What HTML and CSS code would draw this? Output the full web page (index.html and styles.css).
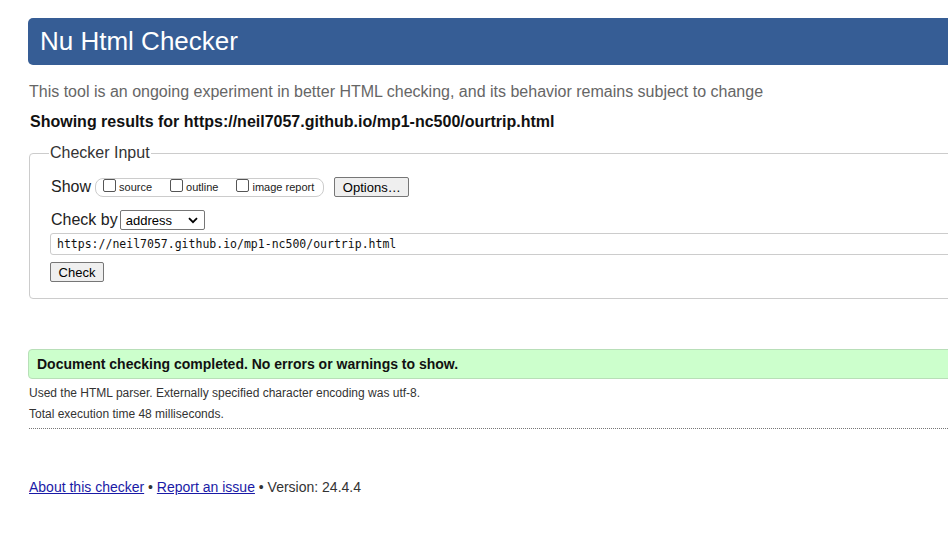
FILE: index.html
```html
<!DOCTYPE html>
<html>
<head>
<meta charset="utf-8">
<title>Nu Html Checker</title>
<link rel="stylesheet" href="styles.css">
</head>
<body>
<div class="page">
  <header class="banner"><h1 class="title">Nu Html Checker</h1></header>
  <p class="intro">This tool is an ongoing experiment in better HTML checking, and its behavior remains subject to change</p>
  <p class="showing">Showing results for https://neil7057.github.io/mp1-nc500/ourtrip.html</p>
  <fieldset class="checker">
    <legend class="legend">Checker Input</legend>
    <div class="row show-row">
      <span class="label">Show</span>
      <span class="opts">
        <label class="opt"><span class="box"></span>source</label>
        <label class="opt"><span class="box"></span>outline</label>
        <label class="opt"><span class="box"></span>image report</label>
      </span>
      <span class="btn options">Options…</span>
    </div>
    <div class="row by-row">
      <span class="label">Check by</span>
      <span class="select">address<svg class="chev" width="10" height="7" viewBox="0 0 10 7"><path d="M1 1.2 L5 5.2 L9 1.2" fill="none" stroke="#000" stroke-width="1.8"/></svg></span>
    </div>
    <div class="url">https://neil7057.github.io/mp1-nc500/ourtrip.html</div>
    <div class="row"><span class="btn check">Check</span></div>
  </fieldset>
  <div class="success">Document checking completed. No errors or warnings to show.</div>
  <p class="detail">Used the HTML parser. Externally specified character encoding was utf-8.</p>
  <p class="detail">Total execution time 48 milliseconds.</p>
  <hr class="dots">
  <p class="footer"><a href="#">About this checker</a> • <a href="#">Report an issue</a> • Version: 24.4.4</p>
</div>
</body>
</html>
```
FILE: styles.css
```css
html { overflow: hidden; background: #fff; }
body { margin: 0; font-family: "Liberation Sans", Arial, sans-serif; color: #222; }
.page { padding-left: 28px; width: 1000px; }
.banner { margin-top: 18px; height: 47px; background: #365d95; border-radius: 5px 0 0 5px; }
.title { margin: 0; padding-left: 12px; font-size: 26px; font-weight: normal; line-height: 47px; color: #fff; }
.intro { margin: 18px 0 0 1px; font-size: 16px; line-height: 18px; color: #666; }
.showing { margin: 12px 0 0 2px; font-size: 16px; line-height: 18px; font-weight: bold; color: #111; }
.checker { margin: 13px 0 0 1px; padding: 6px 20px 16px 21px; border: 1px solid #ccc; border-radius: 4px; }
.legend { padding: 0 1px; font-size: 16px; line-height: 18px; color: #333; margin-left: -2px; }
.row { display: flex; align-items: center; }
.label { font-size: 16px; color: #222; }
.show-row { height: 20px; margin-top: 9px; }
.opts { display: flex; align-items: center; margin-left: 4px; height: 17px; border: 1px solid #ccc; border-radius: 8px; padding: 0 9px 0 7px; }
.opt { display: flex; align-items: center; font-size: 11px; color: #222; margin-right: 18px; }
.opt:last-child { margin-right: 0; }
.box { display: inline-block; width: 11px; height: 11px; border: 1px solid #555; border-radius: 2px; margin-right: 3px; margin-top: -3px; }
.btn { display: inline-flex; align-items: center; justify-content: center; box-sizing: border-box; font-size: 13px; color: #000; background: #efefef; border: 1px solid #767676; border-radius: 2px; height: 20px; }
.options { margin-left: 10px; width: 75px; }
.by-row { margin-top: 13px; height: 20px; }
.select { display: inline-flex; align-items: center; justify-content: space-between; box-sizing: border-box; width: 85px; height: 20px; margin-left: 2px; padding: 0 6px 0 5px; border: 1px solid #767676; border-radius: 2px; font-size: 13px; color: #000; }
.url { margin: 3px -50px 0 -1px; height: 20px; line-height: 20px; border: 1px solid #ccc; border-radius: 3px; padding-left: 6px; font-family: "DejaVu Sans Mono", monospace; font-size: 11.5px; color: #111; }
.check { width: 54px; height: 20px; margin: 7px 0 0 -1px; }
.success { margin-top: 50px; height: 28px; line-height: 28px; background: #ccffcc; border: 1px solid #b8dfb8; border-radius: 4px 0 0 4px; padding-left: 8px; font-size: 14px; font-weight: bold; color: #111; }
.detail { margin: 7px 0 0 1px; font-size: 12px; line-height: 15px; color: #333; }
.detail + .detail { margin-top: 6px; }
.dots { margin: 6px 0 0 1px; border: 0; border-top: 1px dotted #777; height: 0; }
.footer { margin: 50px 0 0 1px; font-size: 14px; color: #333; }
.footer a { color: #1a1aa6; }
```
